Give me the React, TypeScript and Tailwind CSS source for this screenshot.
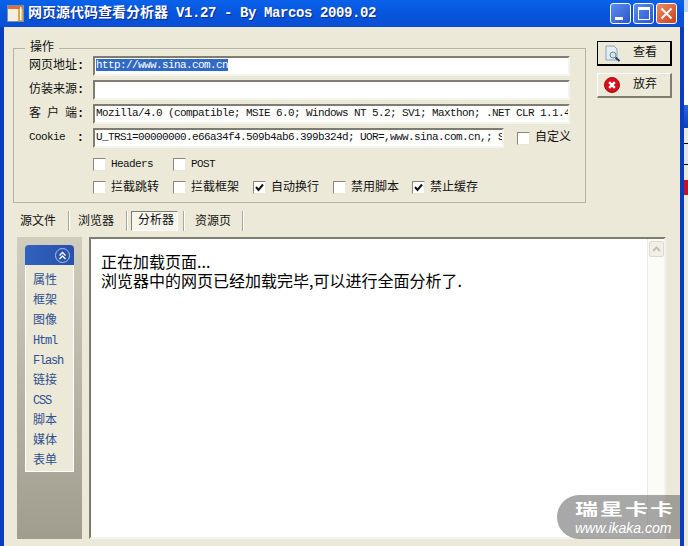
import React from 'react';

const asciiFont = "font-['Liberation_Mono','Noto_Sans_CJK_SC',monospace]";

const Check = ({ label, checked, mono }: { label: string; checked?: boolean; mono?: boolean }) => (
  <label className="flex items-center gap-[5px] h-[13px]">
    <span className="w-[13px] h-[13px] bg-white border border-[#8a8878] border-r-[#e8e6da] border-b-[#e8e6da] flex items-center justify-center shrink-0">
      {checked && (
        <svg width="9" height="9" viewBox="0 0 9 9">
          <path d="M1 4 L3.5 7 L8 1.5" fill="none" stroke="#111" strokeWidth="2" />
        </svg>
      )}
    </span>
    <span className={mono ? 'text-[11px] tracking-[-0.6px]' : 'text-[12px]'}>{label}</span>
  </label>
);

const Field = ({ label, value, selected, width, mono }: { label: string; value?: string; selected?: boolean; width: string; mono?: boolean }) => (
  <div className="flex items-center h-[22px]">
    <div className="w-[79px] pl-[15px] pr-[9px] shrink-0 flex justify-between whitespace-pre text-[12px]">
      <span className={mono ? 'text-[11px] tracking-[-0.6px]' : '[word-spacing:-1.2px]'}>{label}</span>
      <span className="font-bold">:</span>
    </div>
    <div className={`${width} h-[20px] bg-white border-2 border-[#7f7d72] border-r-[#f4f3ec] border-b-[#f4f3ec] overflow-hidden whitespace-nowrap leading-[15px] pl-[1px] text-[11px] tracking-[-0.6px]`}>
      {selected ? <span className="bg-[#316ac5] text-white">{value}</span> : value}
    </div>
  </div>
);

const TabSep = () => <div className="w-[2px] h-[20px] border-l border-[#aca899] border-r border-r-white shrink-0" />;

const App = () => {
  const sideItems = ['属性', '框架', '图像', 'Html', 'Flash', '链接', 'CSS', '脚本', '媒体', '表单'];

  return (
    <div className={`relative w-[688px] h-[546px] overflow-hidden flex bg-[#ece9d8] text-[#111] ${asciiFont}`}>
      {/* main window */}
      <div className="w-[684px] h-full flex flex-col border-l-[4px] border-r-[4px] border-[#0a3cc0] bg-[#ece9d8] shrink-0">
        {/* title bar */}
        <div className="-mx-[4px] h-[27px] shrink-0 flex items-center pl-[7px] pr-[7px] bg-gradient-to-b from-[#0a62ea] via-[#0655dc] to-[#0a4fd4]">
          <svg width="17" height="17" viewBox="0 0 17 17" className="shrink-0">
            <rect x="0.5" y="0.5" width="16" height="16" fill="#f2efe0" stroke="#7f8fa8" />
            <rect x="1" y="1" width="15" height="3" fill="#d9703a" />
            <rect x="11" y="4" width="5" height="12" fill="#e8a33a" />
            <rect x="13" y="2" width="1.5" height="13" fill="#fff" />
          </svg>
          <span className="ml-[4px] text-white font-bold text-[14px] whitespace-pre [text-shadow:1px_1px_#0a2a90]">网页源代码查看分析器</span>
          <span className="ml-[8px] text-white font-bold text-[14px] tracking-[-0.4px] whitespace-pre [text-shadow:1px_1px_#0a2a90]">V1.27 - By Marcos 2009.02</span>
          <div className="ml-auto flex gap-[2px]">
            <div className="w-[21px] h-[21px] rounded-[3px] border border-white bg-gradient-to-br from-[#5f8dee] to-[#2a55cf] relative">
              <span className="absolute left-[4px] bottom-[3px] w-[8px] h-[3px] bg-white" />
            </div>
            <div className="w-[21px] h-[21px] rounded-[3px] border border-white bg-gradient-to-br from-[#5f8dee] to-[#2a55cf] relative">
              <span className="absolute left-[4px] top-[3px] w-[12px] h-[13px] border border-white border-t-[3px]" />
            </div>
            <div className="w-[21px] h-[21px] rounded-[3px] border border-white bg-gradient-to-br from-[#ee8a62] to-[#c8401c] flex items-center justify-center">
              <svg width="13" height="13" viewBox="0 0 13 13">
                <path d="M1.5 1.5 L11.5 11.5 M11.5 1.5 L1.5 11.5" stroke="#fff" strokeWidth="2" />
              </svg>
            </div>
          </div>
        </div>

        {/* top area: group box + buttons */}
        <div className="flex items-start pl-[9px] pt-[14px] h-[176px] shrink-0">
          <fieldset className="w-[573px] h-[162px] border border-[#b5b3a4] pl-0 relative">
            <legend className="ml-[11px] px-[5px] text-[12px] leading-[14px]">操作</legend>
            <div className="flex flex-col gap-[2px]">
              <Field label="网页地址" value="http://www.sina.com.cn" selected width="w-[477px]" />
              <Field label="仿装来源" width="w-[477px]" />
              <Field label="客 户 端" value="Mozilla/4.0 (compatible; MSIE 6.0; Windows NT 5.2; SV1; Maxthon; .NET CLR 1.1.4" width="w-[477px]" />
              <div className="flex items-center">
                <Field label="Cookie" mono value="U_TRS1=00000000.e66a34f4.509b4ab6.399b324d; UOR=,www.sina.com.cn,; S" width="w-[411px]" />
                <div className="ml-[13px]"><Check label="自定义" /></div>
              </div>
            </div>
            <div className="flex pl-[79px] mt-[9px]">
              <div className="w-[80px]"><Check label="Headers" mono /></div>
              <Check label="POST" mono />
            </div>
            <div className="flex pl-[79px] mt-[10px] text-[12px]">
              <div className="w-[80px]"><Check label="拦截跳转" /></div>
              <div className="w-[80px]"><Check label="拦截框架" /></div>
              <div className="w-[80px]"><Check label="自动换行" checked /></div>
              <div className="w-[79px]"><Check label="禁用脚本" /></div>
              <Check label="禁止缓存" checked />
            </div>
          </fieldset>

          <div className="ml-[11px] flex flex-col gap-[7px]">
            <button className="w-[75px] h-[25px] border-2 border-black border-t-[1px] border-l-[1px] bg-[#ece9d8] flex items-center text-[12px] pl-[7px]">
              <svg width="16" height="17" viewBox="0 0 16 17">
                <path d="M1 1 H9 L12 4 V15 H1 Z" fill="#e4ecf6" stroke="#8ba3c0" />
                <circle cx="8" cy="10" r="3" fill="#d6e6e8" stroke="#5f8f96" />
                <path d="M10.5 12.5 L14.5 16" stroke="#1c3a78" strokeWidth="2" />
              </svg>
              <span className="ml-[12px]">查看</span>
            </button>
            <button className="w-[75px] h-[25px] border border-white border-r-[2px] border-b-[2px] border-r-[#7f7d72] border-b-[#7f7d72] bg-[#ece9d8] flex items-center text-[12px] pl-[6px]">
              <svg width="16" height="16" viewBox="0 0 16 16">
                <circle cx="8" cy="8" r="7.5" fill="#d8101c" stroke="#9a1015" />
                <path d="M5.2 5.2 L10.8 10.8 M10.8 5.2 L5.2 10.8" stroke="#fff" strokeWidth="2.4" />
              </svg>
              <span className="ml-[13px]">放弃</span>
            </button>
          </div>
        </div>

        {/* tabs */}
        <div className="flex items-start h-[34px] shrink-0 pt-[8px] pl-[16px] text-[12px] leading-[22px]">
          <span className="w-[48px]">源文件</span>
          <TabSep />
          <span className="ml-[8px] w-[48px]">浏览器</span>
          <TabSep />
          <span className="ml-[3px] w-[47px] pl-[6px] h-[20px] leading-[19px] border border-[#7f7d72] border-r-white border-b-white bg-[#f6f5ee]">分析器</span>
          <span className="w-[5px]" />
          <TabSep />
          <span className="ml-[10px] w-[47px]">资源页</span>
          <TabSep />
        </div>

        {/* bottom panes */}
        <div className="flex pl-[13px]">
          <div className="w-[65px] h-[302px] bg-gradient-to-b from-[#d0cdbe] to-[#a09d8e] pt-[8px] pl-[8px] shrink-0">
            <div className="w-[49px]">
              <div className="h-[20px] rounded-t-[4px] bg-gradient-to-r from-[#2f62bf] to-[#2850a8] flex items-center justify-end pr-[4px]">
                <span className="w-[15px] h-[15px] rounded-full border border-[#a8c2ee] flex items-center justify-center">
                  <svg width="9" height="9" viewBox="0 0 9 9">
                    <path d="M1.5 4.5 L4.5 1.5 L7.5 4.5 M1.5 8 L4.5 5 L7.5 8" fill="none" stroke="#fff" strokeWidth="1.4" />
                  </svg>
                </span>
              </div>
              <div className="bg-[#ece9d8] border border-t-0 border-white pl-[7px] pt-[6px] text-[#2f4f8f] text-[12px]">
                {sideItems.map((item) => (
                  <div key={item} className={`h-[20px] leading-[20px] ${/^[A-Za-z]/.test(item) ? 'tracking-[-1.2px]' : ''}`}>{item}</div>
                ))}
              </div>
            </div>
          </div>
          <div className="ml-[7px] w-[577px] h-[302px] bg-white border-2 border-[#7f7d72] border-r-[#f4f3ec] border-b-[#f4f3ec] flex">
            <div className="flex-1 pl-[10px] pt-[13px] text-[16px] leading-[19px] text-black font-['Noto_Sans_CJK_SC',sans-serif] whitespace-pre">
              <div>正在加载页面...</div>
              <div>浏览器中的网页已经加载完毕,可以进行全面分析了.</div>
            </div>
            <div className="w-[17px] shrink-0 bg-[#fbfbf8] border-l border-[#ecebe4] pt-[2px] pl-[1px]">
              <div className="w-[15px] h-[16px] bg-[#f0efe8] border border-[#dcdad0] rounded-[2px] flex items-center justify-center">
                <svg width="9" height="6" viewBox="0 0 9 6"><path d="M1 5 L4.5 1.5 L8 5" fill="none" stroke="#c4c2b6" strokeWidth="2" /></svg>
              </div>
            </div>
          </div>
        </div>
      </div>

      {/* background window sliver on the right */}
      <div className="flex-1 bg-white flex flex-col">
        <div className="h-[12px] bg-[#c8d8f0]" />
        <div className="h-[93px]" />
        <div className="h-[23px] bg-gradient-to-b from-[#2a6ae0] to-[#0a3cc0]" />
        <div className="h-[15px] bg-[#ece9d8]" />
        <div className="h-[22px] bg-[#dfe6ee] border-y border-black" />
        <div className="h-[15px] bg-[#ece9d8]" />
        <div className="h-[15px] bg-[#c81020]" />
        <div className="flex-1 bg-[#ece9d8]" />
      </div>

      {/* watermark */}
      <div className="absolute left-[557px] top-[495px] w-[123px] h-[44px] rounded-l-[22px] bg-[#6e6e6e]/60 text-white flex flex-col pl-[18px] pt-[7px]">
        <span className="h-[19px] text-[23px] font-bold leading-[19px] tracking-[2px] whitespace-nowrap scale-y-[0.68] origin-top font-['Noto_Sans_CJK_SC',sans-serif]">瑞星卡卡</span>
        <span className="text-[14px] italic leading-[14px] whitespace-nowrap font-['Liberation_Sans',sans-serif]">www.ikaka.com</span>
      </div>
    </div>
  );
};

export default App;
